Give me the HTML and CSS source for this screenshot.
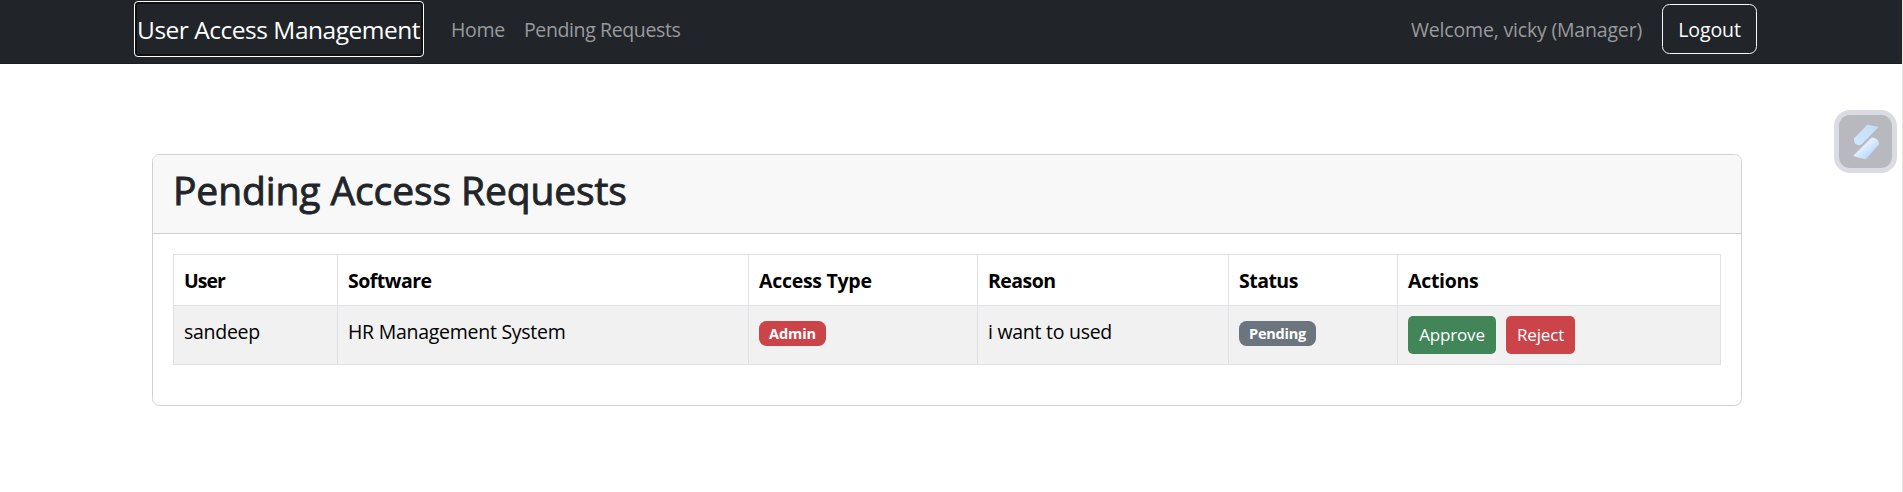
FILE: index.html
```html
<!DOCTYPE html>
<html lang="en">
<head>
<meta charset="utf-8">
<title>Pending Access Requests</title>
<link rel="stylesheet" href="styles.css">
</head>
<body>
<nav class="navbar">
  <a class="brand">User Access Management</a>
  <a class="nav-link home">Home</a>
  <a class="nav-link pending">Pending Requests</a>
  <span class="nav-link welcome">Welcome, vicky (Manager)</span>
  <button class="logout">Logout</button>
</nav>
<main class="card">
  <header class="card-header"><h2>Pending Access Requests</h2></header>
  <div class="card-body">
    <table class="requests">
      <colgroup><col class="c-user"><col class="c-software"><col class="c-type"><col class="c-reason"><col class="c-status"><col class="c-actions"></colgroup>
      <thead>
        <tr><th class="tight">User</th><th>Software</th><th class="loose">Access Type</th><th>Reason</th><th>Status</th><th class="loose">Actions</th></tr>
      </thead>
      <tbody>
        <tr>
          <td>sandeep</td><td>HR Management System</td>
          <td><span class="badge admin">Admin</span></td>
          <td>i want to used</td>
          <td><span class="badge waiting">Pending</span></td>
          <td class="action-cell"><div class="actions"><button class="btn approve">Approve</button><button class="btn reject">Reject</button></div></td>
        </tr>
      </tbody>
    </table>
  </div>
</main>
<div class="widget">
  <svg width="26" height="36" viewBox="0 0 26 36">
    <defs>
      <linearGradient id="g1" x1="1" y1="0" x2="0" y2="1"><stop offset="0" stop-color="#c0dcf6"/><stop offset="1" stop-color="#d3e8fd"/></linearGradient>
      <linearGradient id="g2" x1="0" y1="0" x2="1" y2="1"><stop offset=".1" stop-color="#c8e0f8"/><stop offset=".4" stop-color="#e2f0ff"/><stop offset=".75" stop-color="#b9dafa"/></linearGradient>
    </defs>
    <path fill="url(#g1)" d="M14.500 .5 25.500 3 8.500 20.500Q6 22 3.500 20.500 .5 18.500 1 14.500Z"/>
    <path fill="url(#g2)" d="M17.500 14.500Q19 13 21.500 14 26.500 16 26 20.500L12.500 35.500 0 32Z"/>
  </svg>
</div>
<div class="edge"></div>
</body>
</html>
```
FILE: styles.css
```css
* { box-sizing: border-box; }
body {
  margin: 0;
  height: 492px;
  overflow: hidden;
  background: #fff;
  font: 19.5px/30px "Open Sans", "Noto Sans", sans-serif;
  color: #000;
}
button { font-family: inherit; margin: 0; }
.navbar {
  display: flex;
  align-items: flex-start;
  height: 64px;
  padding: 1px 146px 0 134px;
  background: #212529;
  border-bottom: 1px solid #1b1e21;
  white-space: nowrap;
}
.brand {
  width: 290px;
  height: 56px;
  padding-left: 2px;
  border: 1px solid #fff;
  border-radius: 4px;
  box-shadow: inset 0 0 0 2px #101010;
  color: #fff;
  font-size: 24.5px;
  line-height: 56px;
  letter-spacing: -.48px;
}
.nav-link { color: #999b9d; line-height: 58px; letter-spacing: -.38px; }
.home { margin-left: 27px; width: 73px; letter-spacing: -.3px; }
.welcome { margin-left: auto; margin-right: 20px; letter-spacing: -.18px; }
.logout {
  width: 95px;
  height: 50px;
  margin-top: 3px;
  padding: 1px 0 0;
  border: 1px solid #f8f9fa;
  border-radius: 7.5px;
  background: none;
  color: #fff;
  font-size: 19.5px;
  line-height: 47px;
  letter-spacing: -.1px;
}
.card {
  width: 1590px;
  height: 252px;
  margin: 90px 0 0 152px;
  border: 1px solid #d0d1d2;
  border-radius: 7.5px;
  overflow: hidden;
}
.card-header {
  height: 79px;
  padding: 9px 20px;
  background: #f8f8f8;
  border-bottom: 1px solid #cbcccd;
}
h2 {
  margin: 0;
  font-size: 39px;
  font-weight: 500;
  line-height: 52px;
  letter-spacing: -.1px;
  color: #212529;
  -webkit-text-stroke: .9px #212529;
}
.card-body { padding: 20px; }
.requests {
  table-layout: fixed;
  width: 1547px;
  border-collapse: collapse;
}
.c-user { width: 164px; }
.c-software { width: 411px; }
.c-type { width: 229px; }
.c-reason { width: 251px; }
.c-status { width: 169px; }
.c-actions { width: 323px; }
th, td {
  padding: 11px 10px 9px;
  border: 1px solid #dee2e6;
  text-align: left;
  vertical-align: top;
  white-space: nowrap;
}
th { font-weight: 700; letter-spacing: -.52px; }
th.tight { letter-spacing: -.95px; }
th.loose { letter-spacing: -.28px; }
td { height: 59px; padding-bottom: 0; letter-spacing: -.27px; background: #f1f1f1; }
.action-cell { padding-top: 10px; }
.badge {
  display: block;
  height: 25px;
  margin-top: 4px;
  border-radius: 7.5px;
  color: #fff;
  font-size: 14.5px;
  font-weight: 700;
  line-height: 25px;
  text-align: center;
  letter-spacing: -.1px;
}
.admin { width: 67px; background: #cb444a; }
.waiting { width: 77px; background: #6c757d; letter-spacing: -.25px; }
.actions { display: flex; gap: 10px; }
.btn {
  height: 38px;
  padding: 0;
  border: 0;
  border-radius: 5px;
  color: #fff;
  font-size: 17px;
  line-height: 38px;
  letter-spacing: -.15px;
}
.approve { width: 88px; background: #418558; }
.reject { width: 69px; background: #cb444a; }
.widget {
  position: absolute;
  left: 1834px;
  top: 110px;
  display: flex;
  align-items: center;
  justify-content: center;
  width: 63px;
  height: 63px;
  border: 5px solid #dbdce1;
  border-radius: 16px;
  background: #b8b9bf;
}
.edge {
  position: absolute;
  left: 1902px;
  top: 0;
  width: 1px;
  height: 492px;
  background: #e4e4e4;
}
```
